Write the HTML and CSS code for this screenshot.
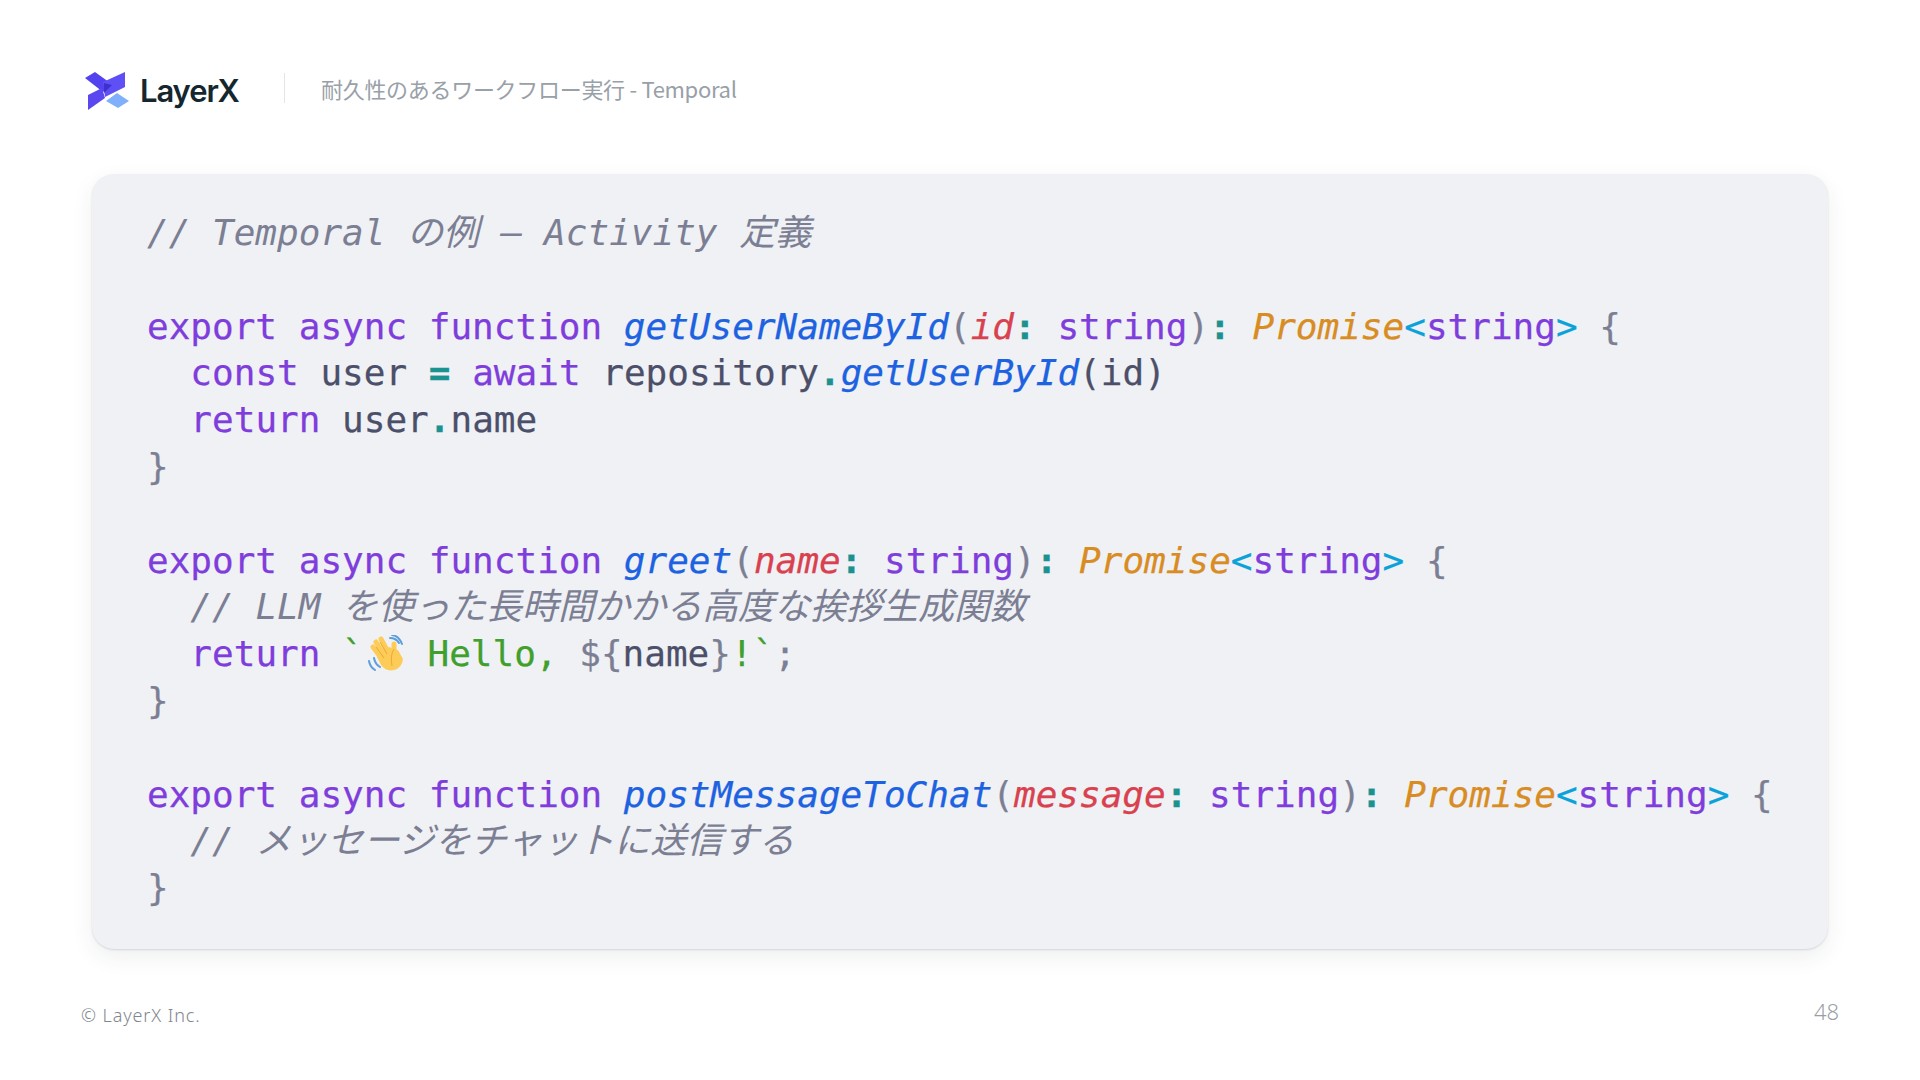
FILE: index.html
```html
<!DOCTYPE html>
<html lang="ja">
<head>
<meta charset="utf-8">
<title>Temporal</title>
<link rel="stylesheet" href="styles.css">
</head>
<body>
<div class="slide">
  <header class="head">
    <div class="brand">
      <svg class="logo" viewBox="0 0 46 38" width="46" height="38">
        <path d="M21 29 L32 21 L44 29 L33 36 Z" fill="#80b0fb"/>
        <path d="M0 6 L10 0 L28 13 L18 20 Z" fill="#5343ee"/>
        <path d="M18 10 L40 0 L40 15 L20 25 Z" fill="#5f50f5"/>
        <path d="M3 23 L17 16 L20 26 L3 38 Z" fill="#5a47f0"/>
        <path d="M19 11 L27 13 L19 21 Z" fill="#3f2fd0"/>
      </svg>
      <span class="wordmark">LayerX</span>
    </div>
    <div class="sep"></div>
    <div class="title">耐久性のあるワークフロー実行 - Temporal</div>
  </header>
  <main class="card">
<pre class="code"><span class="c">// Temporal の例 – Activity 定義</span>

<span class="k">export async function</span> <span class="f">getUserNameById</span><span class="p">(</span><span class="a">id</span><span class="o">:</span> <span class="k">string</span><span class="p">)</span><span class="o">:</span> <span class="y">Promise</span><span class="s">&lt;</span><span class="k">string</span><span class="s">&gt;</span> <span class="p">{</span>
  <span class="k">const</span> <span class="t">user</span> <span class="o">=</span> <span class="k">await</span> <span class="t">repository</span><span class="o">.</span><span class="f">getUserById</span><span class="t">(id)</span>
  <span class="k">return</span> <span class="t">user</span><span class="o">.</span><span class="t">name</span>
<span class="p">}</span>

<span class="k">export async function</span> <span class="f">greet</span><span class="p">(</span><span class="a">name</span><span class="o">:</span> <span class="k">string</span><span class="p">)</span><span class="o">:</span> <span class="y">Promise</span><span class="s">&lt;</span><span class="k">string</span><span class="s">&gt;</span> <span class="p">{</span>
  <span class="c">// LLM を使った長時間かかる高度な挨拶生成関数</span>
  <span class="k">return</span> <span class="g">`</span><svg class="wave" viewBox="0 0 36 36" width="42" height="36"><path d="M2 26 Q3 32 8 35 M7 23 Q8 29 13 32" fill="none" stroke="#5d9fdc" stroke-width="2" stroke-linecap="round"/><path d="M23 3 Q29 3 32 8 M25 0 Q32 1 35 9" fill="none" stroke="#5d9fdc" stroke-width="2" stroke-linecap="round"/><path d="M15 24 L6 12 M18 21 L9 7 M22 19 L14 4 M27 20 L27 9" fill="none" stroke="#fdcb58" stroke-width="5" stroke-linecap="round"/><path d="M10 22 L22 12 L31 15 L36 24 Q35 33 27 35 Q19 37 14 30 Z" fill="#fdcb58"/><path d="M27 14 Q23 20 25 31 M9 12 L17 23 M13 7 L20 19" fill="none" stroke="#e8a62e" stroke-width="0.9"/></svg> <span class="g">Hello,</span> <span class="p">$&#123;</span><span class="t">name</span><span class="p">&#125;</span><span class="g">!`</span><span class="p">;</span>
<span class="p">}</span>

<span class="k">export async function</span> <span class="f">postMessageToChat</span><span class="p">(</span><span class="a">message</span><span class="o">:</span> <span class="k">string</span><span class="p">)</span><span class="o">:</span> <span class="y">Promise</span><span class="s">&lt;</span><span class="k">string</span><span class="s">&gt;</span> <span class="p">{</span>
  <span class="c">// メッセージをチャットに送信する</span>
<span class="p">}</span></pre>
  </main>
  <footer class="foot">
    <span class="copy">© LayerX Inc.</span>
    <span class="num">48</span>
  </footer>
</div>
</body>
</html>
```
FILE: styles.css
```css
html, body { margin: 0; padding: 0; background: #fff; }
.slide { width: 1920px; height: 1080px; overflow: hidden; display: flex; flex-direction: column; }
.head { height: 174px; box-sizing: border-box; padding: 2px 0 0 85px; display: flex; align-items: center; }
.brand { display: flex; align-items: center; gap: 9px; width: 199px; padding-top: 5px; }
.logo { flex: none; }
.wordmark { font: 600 31px/1 "Inter", "Noto Sans", sans-serif; color: #15272e; letter-spacing: -1.1px; }
.sep { width: 1px; height: 30px; background: #e3e5e8; margin-right: 36px; }
.title { font: 400 22px/1 "Noto Sans CJK JP", "Noto Sans", sans-serif; color: #98a0a8; letter-spacing: -0.3px; }
.card { margin: 0 92px; height: 775px; box-sizing: border-box; padding: 36px 55px 0; background: #eff1f5; border-radius: 22px; box-shadow: 0 1px 2px rgba(30, 35, 50, 0.14), 0 8px 22px rgba(40, 45, 60, 0.08); }
.code { margin: 0; font: 400 36px/46.8px "DejaVu Sans Mono", "Noto Sans CJK JP", monospace; color: #4c4f69; white-space: pre; -webkit-text-stroke: 0.25px; }
.c { color: #7c7f93; font-style: italic; -webkit-text-stroke: 0; }
.k { color: #7f3ddc; }
.f { color: #1d62e0; font-style: italic; }
.p { color: #7c7f93; }
.a { color: #d9414f; font-style: italic; }
.o { color: #1b9190; font-weight: 700; }
.y { color: #d88c22; font-style: italic; }
.s { color: #0ba2da; }
.t { color: #4c4f69; }
.g { color: #40a02b; }
.wave { vertical-align: -5px; }
.foot { flex: 1; display: flex; justify-content: space-between; padding: 0 81px 0 81px; }
.copy { margin-top: 57px; font: 300 18px/1 "Noto Sans", sans-serif; color: #7f878e; letter-spacing: 0.9px; }
.num { margin-top: 51px; font: 300 22px/1 "Noto Sans", sans-serif; color: #9a9fa5; }
```
